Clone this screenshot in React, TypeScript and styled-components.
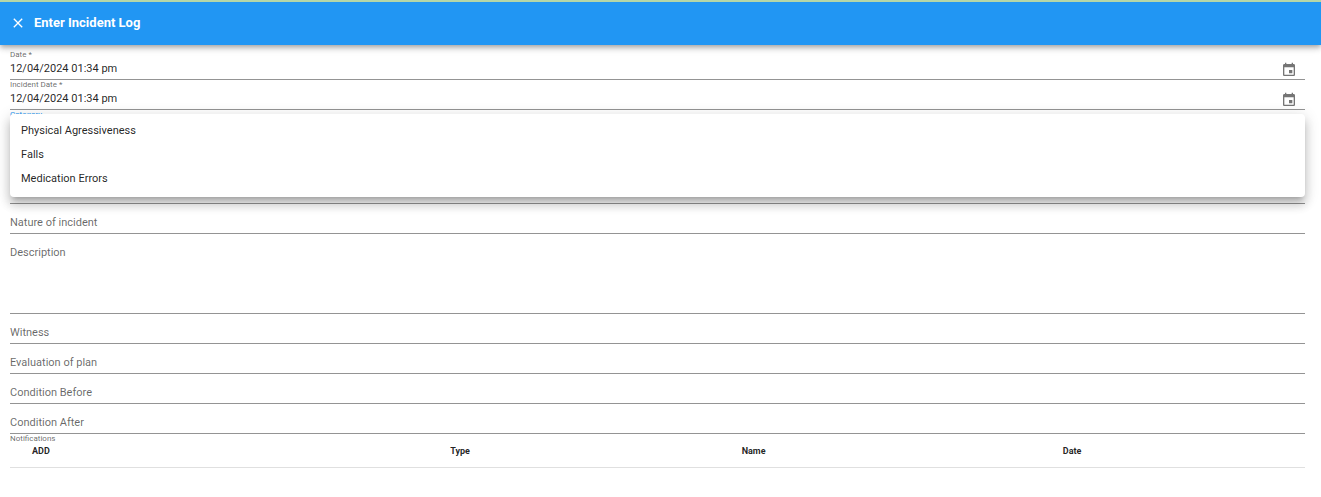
import React, { useState } from "react";
import styled, { createGlobalStyle } from "styled-components";

const categories = ["Physical Agressiveness", "Falls", "Medication Errors"];

function CloseIcon() {
  return (
    <svg width="16" height="16" viewBox="0 0 24 24" fill="currentColor" aria-hidden="true">
      <path d="M19 6.41L17.59 5 12 10.59 6.41 5 5 6.41 10.59 12 5 17.59 6.41 19 12 13.41 17.59 19 19 17.59 13.41 12z" />
    </svg>
  );
}

function EventIcon() {
  return (
    <svg width="16" height="16" viewBox="0 0 24 24" fill="currentColor" aria-hidden="true">
      <path d="M17 12h-5v5h5v-5zM16 1v2H8V1H6v2H5c-1.11 0-1.99.9-1.99 2L3 19c0 1.1.89 2 2 2h14c1.1 0 2-.9 2-2V5c0-1.1-.9-2-2-2h-1V1h-2zm3 18H5V8h14v11z" />
    </svg>
  );
}

function DateField({ id, label }: { id: string; label: string }) {
  const [value, setValue] = useState("12/04/2024 01:34 pm");

  return (
    <Field>
      <Label htmlFor={id} $floating>
        {label}
      </Label>
      <InputRow>
        <Input id={id} value={value} onChange={e => setValue(e.target.value)} />
        <PickerButton type="button">
          <EventIcon />
        </PickerButton>
      </InputRow>
    </Field>
  );
}

function TextField({ id, label, tall }: { id: string; label: string; tall?: boolean }) {
  const [value, setValue] = useState("");

  return (
    <Field $tall={tall}>
      <Label htmlFor={id} $floating={value !== ""}>
        {label}
      </Label>
      {tall ? (
        <TextArea id={id} value={value} onChange={e => setValue(e.target.value)} />
      ) : (
        <Input id={id} value={value} onChange={e => setValue(e.target.value)} />
      )}
    </Field>
  );
}

function CategoryField() {
  const [open, setOpen] = useState(true);
  const [category, setCategory] = useState("");

  const choose = (name: string) => {
    setCategory(name);
    setOpen(false);
  };

  return (
    <CategoryBox>
      <Label htmlFor="category" $floating $active={open}>
        Category
      </Label>
      <Select
        id="category"
        value={category}
        onChange={e => setCategory(e.target.value)}
      >
        <option value="" />
        {categories.map(name => (
          <option key={name}>{name}</option>
        ))}
      </Select>
      {open && (
        <Menu>
          {categories.map(name => (
            <li key={name}>
              <MenuItem type="button" onClick={() => choose(name)}>
                {name}
              </MenuItem>
            </li>
          ))}
        </Menu>
      )}
    </CategoryBox>
  );
}

function App() {
  return (
    <>
      <GlobalStyle />
      <AppBar>
        <IconButton type="button">
          <CloseIcon />
        </IconButton>
        <Title>Enter Incident Log</Title>
      </AppBar>
      <Form>
        <DateField id="date" label="Date *" />
        <DateField id="incident-date" label="Incident Date *" />
        <CategoryField />
        <TextField id="nature" label="Nature of incident" />
        <TextField id="description" label="Description" tall />
        <TextField id="witness" label="Witness" />
        <TextField id="evaluation" label="Evaluation of plan" />
        <TextField id="before" label="Condition Before" />
        <TextField id="after" label="Condition After" />
        <Table>
          <Caption>Notifications</Caption>
          <thead>
            <tr>
              <HeadCell $width="34%">
                <AddButton type="button">ADD</AddButton>
              </HeadCell>
              <HeadCell $width="22.5%">Type</HeadCell>
              <HeadCell $width="24.8%">Name</HeadCell>
              <HeadCell $width="auto">Date</HeadCell>
            </tr>
          </thead>
        </Table>
      </Form>
    </>
  );
}

export default App;

const GlobalStyle = createGlobalStyle`
  * {
    box-sizing: border-box;
  }

  body {
    margin: 0;
    background: #fff;
    color: rgba(0, 0, 0, 0.87);
    font-family: Roboto, sans-serif;
    font-size: 11px;
  }

  button,
  input,
  select,
  textarea {
    margin: 0;
    padding: 0;
    border: 0;
    outline: 0;
    background: none;
    color: inherit;
    font: inherit;
  }
`;

const AppBar = styled.header`
  display: flex;
  align-items: center;
  gap: 8px;
  height: 45px;
  padding: 0 10px 2px;
  border-top: 2px solid #b5d6a7;
  background: #2196f3;
  color: #fff;
  box-shadow: 0 2px 4px -1px rgba(0, 0, 0, 0.2), 0 4px 5px rgba(0, 0, 0, 0.14),
    0 1px 10px rgba(0, 0, 0, 0.12);
`;

const Title = styled.h1`
  margin: 0;
  font-size: 13px;
  font-weight: 700;
  line-height: 16px;
`;

const IconButton = styled.button`
  display: flex;
  align-items: center;
  cursor: pointer;
`;

const PickerButton = styled(IconButton)`
  height: 22px;
  color: rgba(0, 0, 0, 0.54);
`;

const Form = styled.form`
  padding: 5px 16px 24px 10px;
`;

const Field = styled.div<{ $tall?: boolean }>`
  display: grid;
  grid-template-columns: 1fr;
  grid-template-rows: 9px ${props => (props.$tall ? "68px" : "18px")};
  padding-bottom: 2px;
  border-bottom: 1px solid #949494;
`;

const Label = styled.label<{ $floating?: boolean; $active?: boolean }>`
  grid-area: ${props => (props.$floating ? "1 / 1" : "2 / 1")};
  justify-self: start;
  color: ${props => (props.$active ? "#2196f3" : "rgba(0, 0, 0, 0.6)")};
  font-size: ${props => (props.$floating ? "8px" : "11px")};
  line-height: ${props => (props.$floating ? "9px" : "20px")};
`;

const InputRow = styled.div`
  grid-area: 2 / 1;
  display: flex;
  align-items: flex-start;
  padding-right: 8px;
`;

const Input = styled.input`
  grid-area: 2 / 1;
  flex: 1;
  min-width: 0;
  height: 18px;
`;

const TextArea = styled.textarea`
  grid-area: 2 / 1;
  resize: none;
`;

const CategoryBox = styled(Field)`
  position: relative;
  grid-template-rows: 9px 82px;
`;

const Select = styled.select`
  grid-area: 2 / 1;
  align-self: start;
  height: 18px;
  appearance: none;
`;

const Menu = styled.ul`
  position: absolute;
  z-index: 1;
  top: 4px;
  left: 0;
  right: 0;
  margin: 0;
  padding: 4px 0 7px;
  border-radius: 4px;
  background: #fff;
  list-style: none;
  box-shadow: 0 5px 5px -3px rgba(0, 0, 0, 0.2), 0 8px 10px 1px rgba(0, 0, 0, 0.14),
    0 3px 14px 2px rgba(0, 0, 0, 0.12);
`;

const MenuItem = styled.button`
  display: block;
  width: 100%;
  height: 24px;
  padding: 0 11px;
  text-align: left;
  cursor: pointer;

  &:hover {
    background: rgba(0, 0, 0, 0.04);
  }
`;

const Table = styled.table`
  width: 100%;
  table-layout: fixed;
  border-collapse: collapse;
`;

const Caption = styled.caption`
  color: rgba(0, 0, 0, 0.6);
  font-size: 8px;
  line-height: 9px;
  text-align: left;
`;

const HeadCell = styled.th<{ $width: string }>`
  width: ${props => props.$width};
  height: 24px;
  padding: 0 0 8px;
  border-bottom: 1px solid #e0e0e0;
  font-size: 9px;
  font-weight: 700;
  line-height: 16px;
  text-align: left;
`;

const AddButton = styled.button`
  padding: 0 22px;
  cursor: pointer;
`;
